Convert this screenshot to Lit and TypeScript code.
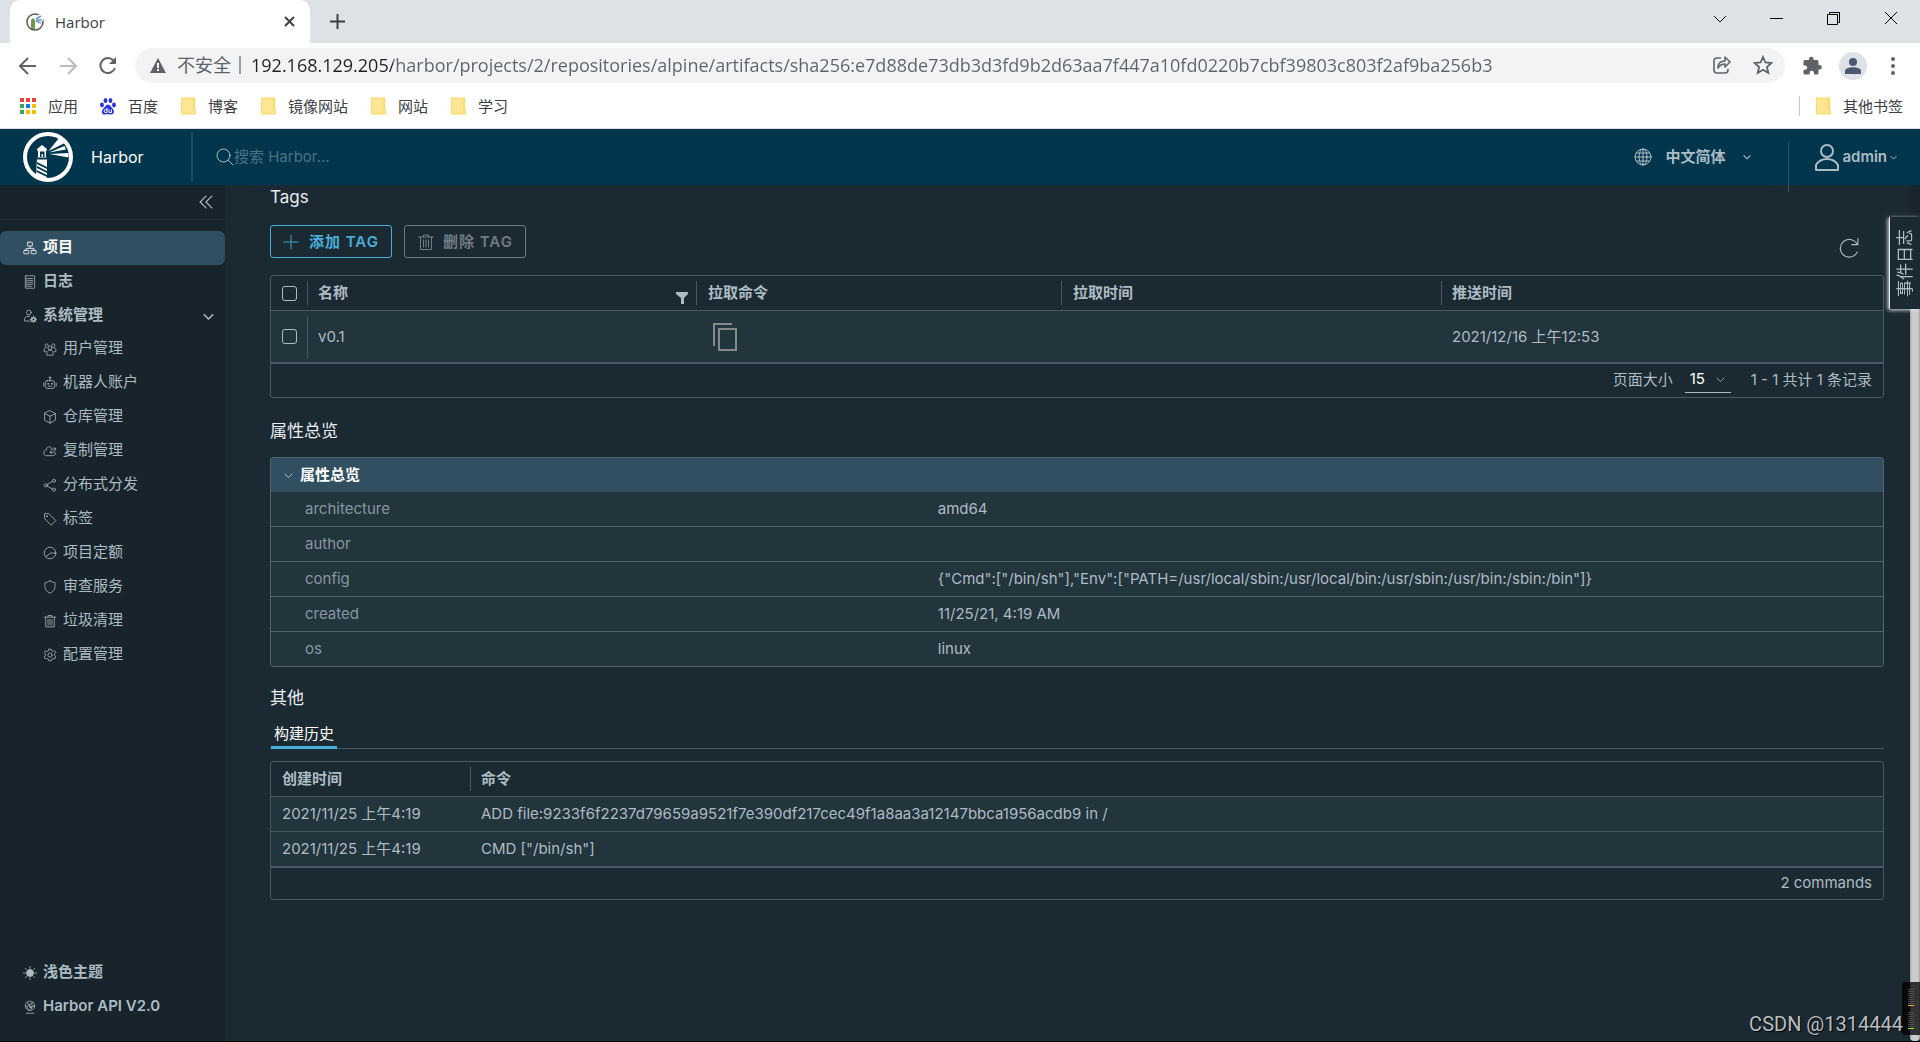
import { LitElement, html, css, svg, nothing } from "lit";
import { customElement, state } from "lit/decorators.js";
import { classMap } from "lit/directives/class-map.js";

const line = (size: number, body: unknown, width = 2, cls = "") => html`<svg
  class=${"ico " + cls} width=${size} height=${size} viewBox="0 0 36 36" fill="none"
  stroke="currentColor" stroke-width=${width} stroke-linecap="round" stroke-linejoin="round" aria-hidden="true">${body}</svg>`;

const glyphs: Record<string, unknown> = {
  project: svg`<rect x="12" y="3" width="12" height="10" rx="1"/><path d="M18 13v6M8 25v-6h20v6"/><rect x="2" y="24" width="13" height="9" rx="2"/><rect x="21" y="24" width="13" height="9" rx="2"/>`,
  log: svg`<rect x="6" y="2" width="24" height="32" rx="1"/><path d="M13 9h12M13 14h12M13 19h12M13 24h12M13 29h9M10 8v22"/>`,
  admin: svg`<circle cx="15" cy="9" r="6"/><path d="M18 31H4v-6c2-5 7-7 13-6"/><circle cx="27" cy="27" r="4.500" stroke-width="4"/><path d="M27 18v3M27 33v3M18 27h3M33 27h3M21 21l2 2M31 31l2 2M33 21l-2 2M23 31l-2 2"/>`,
  users: svg`<circle cx="18" cy="15" r="5"/><path d="M10 33v-6c1-5 4-6 8-6s7 1 8 6v6zM13 10a4 4 0 1 0-6 2M23 10a4 4 0 1 1 6 2M7 25H3v-6c0-3 3-5 6-5M29 25h4v-6c0-3-3-5-6-5"/>`,
  robot: svg`<rect x="6" y="12" width="24" height="20" rx="5"/><path d="M18 12V5M2 18v8M34 18v8M13 26h10"/><circle cx="18" cy="4" r="2"/><circle cx="13" cy="20" r="1.500"/><circle cx="23" cy="20" r="1.500"/>`,
  cube: svg`<path d="M18 2l14 7v17l-14 8-14-8V9zM4 9l14 7 14-7M18 16v18"/>`,
  cloud: svg`<path d="M22 10C19 5 9 6 9 15c-5 0-7 4-7 8 0 4 3 7 7 7h16c4 0 7-2 7-6M20 13h13M29 9l4 4-4 4M31 21H18M22 17l-4 4 4 4"/>`,
  share: svg`<circle cx="7" cy="19" r="4"/><circle cx="28" cy="7" r="4"/><circle cx="28" cy="30" r="4"/><path d="M11 17l13-8M11 21l13 7"/>`,
  tag: svg`<path d="M4 5v12l17 17 12-12L16 5z"/><circle cx="10" cy="11" r="1.500"/>`,
  quota: svg`<circle cx="18" cy="18" r="15"/><path d="M33 18H20L7 27"/>`,
  shield: svg`<path d="M18 2c4 3 8 4 13 5v10c0 8-5 13-13 17C10 30 5 25 5 17V7c5-1 9-2 13-5z"/>`,
  trash: svg`<path d="M3 8h30M7 8v25h22V8M13 8V4h10v4M13 14v14M18 14v14M23 14v14"/>`,
  gear: svg`<circle cx="18" cy="18" r="5.500"/><path d="M15 3h6l1 4 4 2 4-2 3 5-3 3v5l3 3-3 5-4-1-4 2-1 4h-6l-1-4-4-2-4 1-3-5 3-3v-5l-3-3 3-5 4 2 4-2z"/>`,
  sun: svg`<circle cx="18" cy="18" r="9" fill="currentColor"/><path d="M18 1v5M18 30v5M1 18h5M30 18h5M6 6l3 3M27 27l3 3M30 6l-3 3M9 27l-3 3"/>`,
  api: svg`<circle cx="18" cy="15" r="12"/><path d="M8 34h20M11 6l12 18M9 17l12-8 7 9M9 17l7 9M21 9l4-3"/><circle cx="20" cy="18" r="3"/>`,
  plus: svg`<path d="M18 2v32M2 18h32"/>`,
  search: svg`<circle cx="15" cy="15" r="13"/><path d="M25 25l9 9"/>`,
  globe: svg`<circle cx="18" cy="18" r="16"/><ellipse cx="18" cy="18" rx="8" ry="16"/><path d="M18 2v32M2 18h32M5 10h26M5 26h26"/>`,
  down: svg`<path d="M4 12l14 14 14-14"/>`,
  collapse: svg`<path d="M18 3L3 18l15 15M33 3L18 18l15 15"/>`,
  refresh: svg`<path d="M33 25A16 16 0 1 1 32 10M34 1v11H23"/>`,
};

const folder = svg`<path d="M2 0h13a1 1 0 0 1 1 1v11l1 2v3a1 1 0 0 1-1 1H2a1 1 0 0 1-1-1V1a1 1 0 0 1 1-1z" fill="#ffd75e"/><path d="M2 1h12v16H2z" fill="#ffe694"/><path d="M14 13l1-1 1 2v3h-2z" fill="#ffe694"/>`;

@customElement("browser-chrome")
export class BrowserChrome extends LitElement {
  static styles = css`
    :host { display: block; background: #fff; color: #3c4043; font: 15px/20px "Open Sans", "Noto Sans CJK SC", sans-serif; border-bottom: 1px solid #dadce0; }
    button { border: 0; background: none; padding: 0; color: inherit; font: inherit; display: flex; align-items: center; justify-content: center; }
    svg { display: block; flex: none; }
    .tabs { height: 43px; background: #dee1e6; display: flex; align-items: center; padding-left: 10px; }
    .tab { width: 300px; height: 43px; box-sizing: border-box; background: #fff; border-radius: 10px 10px 0 0; display: flex; align-items: center; gap: 11px; padding: 0 15px 0 16px; }
    .tab-title { flex: 1; }
    .new { margin-left: 20px; }
    .window { margin-left: auto; display: flex; gap: 43px; padding: 0 22px 6px 0; color: #000; }
    .window button { width: 14px; height: 14px; }
    .bar { display: flex; align-items: center; height: 45px; padding: 0 18px; color: #5f6368; }
    .nav { display: flex; gap: 20px; margin-right: 17px; }
    .nav button { width: 20px; height: 20px; }
    .off { color: #babcbe; }
    .pill { flex: 1; height: 35px; box-sizing: border-box; border-radius: 18px; background: #f1f3f4; display: flex; align-items: center; padding: 0 12px 1px 15px; font-size: 18px; line-height: 24px; min-width: 0; }
    .insecure { margin-left: 11px; padding-right: 8px; }
    .rule { width: 2px; height: 18px; background: #9aa0a6; }
    .url { flex: 1; min-width: 0; margin-left: 10px; padding: 0; border: 0; outline: 0; font: 18px/24px "Open Sans", sans-serif; color: transparent; background: linear-gradient(90deg, #202124 142px, #5f6368 142px); -webkit-background-clip: text; background-clip: text; }
    .pill-actions { display: flex; gap: 21px; }
    .side { display: flex; align-items: center; gap: 17px; margin-left: 18px; }
    .avatar { width: 28px; height: 28px; border-radius: 14px; background: #dee1e6; color: #4b5a73; }
    .marks { display: flex; align-items: center; height: 40px; box-sizing: border-box; padding: 0 17px 4px 20px; gap: 22px; }
    .mark { display: flex; align-items: center; gap: 12px; color: #3c4043; text-decoration: none; }
    .other { margin-left: auto; border-left: 1px solid #c6c8cb; padding-left: 15px; }
  `;
  @state() url = "192.168.129.205/harbor/projects/2/repositories/alpine/artifacts/sha256:e7d88de73db3d3fd9b2d63aa7f447a10fd0220b7cbf39803c803f2af9ba256b3";
  private stroke(s: number, body: unknown, w = 2) {
    return html`<svg width=${s} height=${s} viewBox="0 0 ${s} ${s}" fill="none" stroke="currentColor" stroke-width=${w} aria-hidden="true">${body}</svg>`;
  }
  private folderMark(name: string) {
    return html`<a class="mark" href="#"><svg width="16" height="18" viewBox="0 0 17 18" aria-hidden="true">${folder}</svg>${name}</a>`;
  }
  render() {
    const dots = ["#ea4335", "#ea4335", "#ea4335", "#34a853", "#1a73e8", "#fbbc04", "#34a853", "#fbbc04", "#fbbc04"];
    return html`
      <div class="tabs">
        <div class="tab">
          <svg width="18" height="18" viewBox="0 0 18 18" fill="none" aria-hidden="true">
            <ellipse cx="9" cy="9" rx="8" ry="8" stroke="#555" stroke-width="1.500"/>
            <path d="M5 7l2-2 2 2v9H5z" fill="#6c9b45"/><path d="M12 2l5-1v7h-4z" fill="#fff"/><path d="M10 6l5-3M10 7h6M10 8l5 2" stroke="#6d9ccc" stroke-width="1.500"/>
          </svg>
          <span class="tab-title">Harbor</span>
          <button aria-label="关闭标签页">${this.stroke(11, svg`<path d="M1 1l9 9M10 1l-9 9"/>`)}</button>
        </div>
        <button class="new" aria-label="新标签页">${this.stroke(15, svg`<path d="M7.500 0v15M0 7.500h15"/>`)}</button>
        <div class="window">
          <button aria-label="搜索标签页">${this.stroke(14, svg`<path d="M1 4l6 6 6-6"/>`, 1)}</button>
          <button aria-label="最小化">${this.stroke(14, svg`<path d="M0 6.500h13"/>`, 1)}</button>
          <button aria-label="还原">${this.stroke(14, svg`<path d="M.5 2.500h10v10H.5zM2.500 2.500v-2h10v10h-2"/>`, 1)}</button>
          <button aria-label="关闭">${this.stroke(14, svg`<path d="M1 0l12 12M13 0L1 12"/>`, 1)}</button>
        </div>
      </div>
      <div class="bar">
        <div class="nav">
          <button aria-label="后退">${this.stroke(20, svg`<path d="M18 10H3M10 2l-8 8 8 8"/>`)}</button>
          <button class="off" aria-label="前进">${this.stroke(20, svg`<path d="M2 10h15M10 2l8 8-8 8"/>`)}</button>
          <button aria-label="重新加载">${this.stroke(20, svg`<path d="M17 12a7.500 7.500 0 1 1-1.500-7.500"/><path d="M18 1v7h-7z" fill="currentColor" stroke="none"/>`)}</button>
        </div>
        <div class="pill">
          <svg width="16" height="15" viewBox="0 0 16 15" aria-hidden="true"><path d="M8 0l8 15H0z" fill="#5f6368"/><path d="M8 5v5M8 11v2" stroke="#fff" stroke-width="2"/></svg>
          <span class="insecure">不安全</span><span class="rule"></span>
          <input class="url" aria-label="地址" .value=${this.url} />
          <div class="pill-actions">
            <button aria-label="分享">${this.stroke(20, svg`<path d="M9 3H5a3 3 0 0 0-3 3v9a3 3 0 0 0 3 3h8a3 3 0 0 0 3-3v-1M6 13c0-5 3-7 7-7V2l5 5-5 5V9c-3 0-5 1-7 4z" stroke-linejoin="round"/>`, 1.6)}</button>
            <button aria-label="收藏">${this.stroke(20, svg`<path d="M10 2l2.400 5.500 6 .5-4.500 4 1.400 6-5.300-3.200L4.700 18l1.400-6-4.500-4 6-.5z"/>`, 1.8)}</button>
          </div>
        </div>
        <div class="side">
          <button aria-label="扩展程序"><svg width="19" height="19" viewBox="0 0 19 19" fill="currentColor" aria-hidden="true"><path d="M6 4V3a2.300 2.300 0 0 1 4.600 0v1H14a1.500 1.500 0 0 1 1.500 1.500V9h1a2.300 2.300 0 0 1 0 4.600h-1V17a1.500 1.500 0 0 1-1.500 1.500h-3V17a2.200 2.200 0 0 0-4.400 0v1.500H2A1.500 1.500 0 0 1 .5 17v-3.200H2a2.200 2.200 0 0 0 0-4.400H.5V5.500A1.500 1.500 0 0 1 2 4z"/></svg></button>
          <button class="avatar" aria-label="个人资料"><svg width="18" height="18" viewBox="0 0 18 18" fill="currentColor" aria-hidden="true"><circle cx="9" cy="5" r="4"/><path d="M1 17v-3c0-5 16-5 16 0v3z"/></svg></button>
          <button aria-label="更多"><svg width="18" height="18" viewBox="0 0 18 18" fill="currentColor" aria-hidden="true"><circle cx="9" cy="2" r="2"/><circle cx="9" cy="9" r="2"/><circle cx="9" cy="16" r="2"/></svg></button>
        </div>
      </div>
      <nav class="marks">
        <a class="mark" href="#"><svg width="16" height="16" viewBox="0 0 16 16" aria-hidden="true">${dots.map((c, i) => svg`<rect x=${(i % 3) * 6} y=${Math.floor(i / 3) * 6} width="4" height="4" fill=${c}/>`)}</svg>应用</a>
        <a class="mark" href="#"><svg width="16" height="17" viewBox="0 0 16 17" fill="#2932e1" aria-hidden="true"><ellipse cx="2" cy="7" rx="1.900" ry="2.400"/><ellipse cx="5.500" cy="2.600" rx="1.900" ry="2.500"/><ellipse cx="10.500" cy="2.600" rx="1.900" ry="2.500"/><ellipse cx="14" cy="7" rx="1.900" ry="2.400"/><path d="M8 6.500c2 0 3 2.500 4.500 4 2.500 2.500 1.500 6-1.500 6-2 0-4-.5-6 0-3 .5-4.500-3.500-1.500-6C5 9 6 6.500 8 6.500z"/><path d="M7 10v4.500H5.500a1 1 0 0 1 0-2.800H7M9 11.500v3h2.500v-3" stroke="#fff" fill="none"/></svg>百度</a>
        ${["博客", "镜像网站", "网站", "学习"].map((n) => this.folderMark(n))}
        <div class="other">${this.folderMark("其他书签")}</div>
      </nav>`;
  }
}

interface NavItem { icon: string; label: string; }

@customElement("app-root")
export class AppRoot extends LitElement {
  static styles = css`
    :host { display: flex; flex-direction: column; height: 100vh; box-sizing: border-box; border-bottom: 1px solid #000; overflow: hidden; position: relative; background: #1b2a32; color: #adbbc4; font: 15px/24px Inter, "Noto Sans CJK SC", sans-serif; }
    * { box-sizing: border-box; }
    button, select, input { font: inherit; color: inherit; }
    button { background: none; border: 0; padding: 0; }
    a { color: inherit; text-decoration: none; }
    h2 { margin: 0; font-size: 17px; font-weight: 400; line-height: 24px; color: #e9ecef; }
    .ico { display: block; flex: none; }
    .header { flex: none; height: 56px; background: #00364d; display: flex; align-items: center; padding-right: 23px; }
    .brand { width: 191px; padding-left: 23px; display: flex; align-items: center; gap: 18px; color: #fff; font-size: 16px; }
    .search { display: flex; align-items: center; flex: 1; height: 50px; padding-left: 23px; border-left: 2px solid #1c4e63; }
    .search input { flex: 1; border: 0; outline: 0; background: none; padding: 0; }
    .search input::placeholder { color: #4c7183; opacity: 1; }
    .menu { display: flex; align-items: center; font-weight: 600; }
    .lang { gap: 13px; padding-right: 37px; }
    .lang .down { margin-left: 5px; }
    .account { align-self: flex-start; margin-top: 13px; height: 50px; padding: 0 0 20px 26px; border-left: 1px solid #2f5363; gap: 3px; }
    .body { flex: 1; min-height: 0; display: flex; }
    .sidenav { width: 225px; flex: none; background: #17242b; display: flex; flex-direction: column; }
    .fold { height: 35px; border-bottom: 1px solid #22333b; display: flex; align-items: center; justify-content: flex-end; padding-right: 12px; }
    .list { list-style: none; margin: 0; padding: 0; font-weight: 600; }
    .main { margin-top: 11px; }
    .sub { margin-top: -1px; font-weight: 400; }
    .link { width: 100%; display: flex; align-items: center; gap: 6px; height: 34px; padding: 0 11px 2px 23px; border-radius: 6px; text-align: left; }
    .link .ico { margin-top: 2px; }
    .link .down { margin-left: auto; }
    .sub .link { padding-left: 43px; }
    .active { background: #324f62; color: #fff; }
    .foot { margin-top: auto; padding-bottom: 17px; }
    .content { flex: 1; min-width: 0; padding: 0 26px 0 45px; }
    .toolbar { display: flex; align-items: flex-end; gap: 12px; margin: 16px 0 17px; }
    .btn { height: 33px; padding: 0 12px; border: 1px solid #49afd9; border-radius: 3px; color: #49afd9; display: flex; align-items: center; gap: 10px; font-size: 15px; font-weight: 600; letter-spacing: 1px; }
    .btn:disabled { border-color: #6c7a82; color: #6f7c84; gap: 8px; }
    .refresh { margin-left: auto; padding-right: 25px; }
    .grid { border: 1px solid #495865; border-radius: 3px; }
    table { width: 100%; border-collapse: separate; border-spacing: 0; table-layout: fixed; }
    th, td { padding: 0; text-align: left; font-weight: 400; }
    th { font-weight: 600; height: 35px; border-bottom: 1px solid #495865; }
    .cell { display: flex; align-items: center; height: 24px; padding-left: 10px; border-left: 1px solid #495865; }
    .cell .filter { margin: 10px 8px 0 auto; }
    td { background: #22343c; height: 35px; border-bottom: 1px solid #495865; padding-left: 11px; }
    tr:last-child td { border-bottom: 0; height: 34px; }
    .tags tr td { height: 51px; }
    .tags tr .pick, .tags tr .first { padding-left: 0; }
    .tags .first .cell { height: 42px; }
    .check { width: 36px; }
    .name { width: 389px; }
    .cmd { width: 365px; }
    .pulled { width: 380px; }
    .when { width: 199px; }
    .history .lead { border-left: 0; }
    .history .lead, .cmd .cell, .pulled .cell { padding-left: 11px; }
    input[type="checkbox"] { appearance: none; display: block; width: 15px; height: 15px; margin: 0 0 0 11px; border: 1px solid #adbbc4; border-radius: 3px; }
    input[type="checkbox"]:checked { background: #49afd9; }
    .copy { display: block; color: #85898b; margin-left: 6px; }
    .gridfoot { display: flex; align-items: center; justify-content: flex-end; height: 35px; border-top: 2px solid #495865; padding: 0 11px 2px 0; }
    .history + .gridfoot { height: 33px; }
    .size { display: flex; align-items: center; gap: 12px; margin-right: 20px; }
    .pick-size { display: flex; align-items: center; position: relative; border-bottom: 1px solid #adbbc4; }
    .pick-size select { appearance: none; width: 46px; height: 25px; padding: 0 5px; border: 0; outline: 0; background: none; color: #fff; }
    .pick-size .ico { position: absolute; right: 6px; pointer-events: none; color: #8c9aa2; }
    .mid { margin: 21px 0 14px; }
    .panel { border: 1px solid #54646e; border-radius: 3px; }
    .panel-head { width: 100%; height: 34px; display: flex; align-items: center; gap: 7px; padding-left: 13px; background: #324f62; color: #fff; font-weight: 600; }
    .panel-head .ico { color: #adbbc4; }
    .panel td { border-color: #54646e; }
    .panel td:first-child { width: 40%; padding-left: 34px; color: #8797a0; }
    .panel td + td { padding-left: 22px; }
    .late { margin: 19px 0 11px; }
    .tabs { height: 28px; border-bottom: 1px solid #495865; margin-bottom: 12px; display: flex; }
    .tabs button { height: 28px; margin-left: 1px; padding: 0 3px; color: #fff; border-bottom: 3px solid #49afd9; line-height: 24px; }
    .scroll { width: 10px; flex: none; background: linear-gradient(90deg, #a8a8a8, #cbcbcb 2px, #cbcbcb 8px, #a0a0a0); border-top: 90px solid #1a262d; border-radius: 0 0 4px 4px; }
    .events { position: absolute; right: 0; top: 217px; width: 31px; height: 92px; background: #1b2a32; border: 0 solid #e4e8ea; border-left-width: 1px; box-shadow: -1px 1px 4px #dfe3e6; }
    .events span { display: block; margin: 0 auto; writing-mode: vertical-rl; text-orientation: sideways; rotate: 180deg; line-height: 24px; font-size: 17px; }
    .meter { position: absolute; right: 0; bottom: 6px; width: 18px; height: 53px; border-radius: 3px 0 0 3px; background: rgba(0, 0, 0, 0.75); padding: 7px 6px; }
    .mark { position: absolute; right: 17px; bottom: 5px; font: 20px/24px Roboto, sans-serif; color: #b9bdc0; text-shadow: 1px 1px 1px #000; }
  `;

  @state() private open = true;
  @state() private panelOpen = true;
  @state() private current = "项目";

  private top: NavItem[] = [
    { icon: "project", label: "项目" },
    { icon: "log", label: "日志" },
  ];
  private admin: NavItem[] = [
    { icon: "users", label: "用户管理" },
    { icon: "robot", label: "机器人账户" },
    { icon: "cube", label: "仓库管理" },
    { icon: "cloud", label: "复制管理" },
    { icon: "share", label: "分布式分发" },
    { icon: "tag", label: "标签" },
    { icon: "quota", label: "项目定额" },
    { icon: "shield", label: "审查服务" },
    { icon: "trash", label: "垃圾清理" },
    { icon: "gear", label: "配置管理" },
  ];
  private overview: [string, string][] = [
    ["architecture", "amd64"],
    ["author", ""],
    ["config", '{"Cmd":["/bin/sh"],"Env":["PATH=/usr/local/sbin:/usr/local/bin:/usr/sbin:/usr/bin:/sbin:/bin"]}'],
    ["created", "11/25/21, 4:19 AM"],
    ["os", "linux"],
  ];
  private history: [string, string][] = [
    ["2021/11/25 上午4:19", "ADD file:9233f6f2237d79659a9521f7e390df217cec49f1a8aa3a12147bbca1956acdb9 in /"],
    ["2021/11/25 上午4:19", 'CMD ["/bin/sh"]'],
  ];

  private item(i: NavItem) {
    return html`<li><a href="#" class=${classMap({ link: true, active: i.label === this.current })} @click=${(e: Event) => { e.preventDefault(); this.current = i.label; }}>${line(14, glyphs[i.icon], 2)}${i.label}</a></li>`;
  }

  private logo() {
    return html`<svg class="ico" width="50" height="50" viewBox="0 0 50 50" aria-hidden="true">
      <circle cx="25" cy="25" r="23" fill="none" stroke="#fff" stroke-width="4"/>
      <path d="M19 13l5 4v1.500h-1v7h1V48c-4 0-9-2-11-4l1-18.500h1v-7h-1V17z" fill="#fff"/>
      <path d="M17 25v-5.500h4.500V25H20v-3h-1.500v3zM14 25.500h10v2H14zM14 30l10 5v2l-10-5zM14 34l10 5v2l-10-5zM13.500 38l10.500 5v2l-10.500-5z" fill="#00364d"/>
      <path d="M25.500 19L36 6l8 4zM26 20.500L41.500 14l1.500 3.500zM26.500 22l19-1v4.500z" fill="#fff"/>
    </svg>`;
  }

  render() {
    return html`
      <browser-chrome></browser-chrome>
      <header class="header">
        <a class="brand" href="#">${this.logo()}Harbor</a>
        <label class="search">${line(18, glyphs.search)}<input type="search" aria-label="搜索" placeholder="搜索 Harbor..." /></label>
        <button class="menu lang">${line(18, glyphs.globe)}中文简体${line(8, glyphs.down, 5, "down")}</button>
        <button class="menu account"><svg class="ico" width="24" height="27" viewBox="0 0 24 27" fill="none" stroke="currentColor" stroke-width="2" aria-hidden="true"><circle cx="12" cy="7" r="6"/><path d="M1 26v-5c5-8 17-8 22 0v5z" stroke-linejoin="round"/></svg>admin${line(7, glyphs.down, 5)}</button>
      </header>
      <div class="body">
        <nav class="sidenav">
          <button class="fold" aria-label="折叠">${line(14, glyphs.collapse, 3)}</button>
          <ul class="list main">
            ${this.top.map((i) => this.item(i))}
            <li>
              <button class="link" aria-expanded=${this.open} @click=${() => (this.open = !this.open)}>${line(14, glyphs.admin, 2)}系统管理${line(11, glyphs.down, 5, "down")}</button>
              ${this.open ? html`<ul class="list sub">${this.admin.map((i) => this.item(i))}</ul>` : nothing}
            </li>
          </ul>
          <ul class="list foot">
            <li><button class="link">${line(14, glyphs.sun, 2)}浅色主题</button></li>
            <li><a class="link" href="#">${line(14, glyphs.api, 2)}Harbor API V2.0</a></li>
          </ul>
        </nav>
        <main class="content">
          <h2>Tags</h2>
          <div class="toolbar">
            <button class="btn">${line(16, glyphs.plus)}添加 TAG</button>
            <button class="btn" disabled>${line(18, glyphs.trash)}删除 TAG</button>
            <button class="refresh" aria-label="刷新">${line(20, glyphs.refresh)}</button>
          </div>
          <div class="grid">
            <table class="tags">
              <thead><tr>
                <th class="check"><input type="checkbox" aria-label="全选" /></th>
                <th class="name"><div class="cell">名称<button class="filter" aria-label="筛选"><svg class="ico" width="12" height="12" viewBox="0 0 12 12" fill="currentColor" aria-hidden="true"><path d="M0 0h12v2L8 6v6H5V6L0 2z"/></svg></button></div></th>
                <th class="cmd"><div class="cell">拉取命令</div></th>
                <th class="pulled"><div class="cell">拉取时间</div></th>
                <th><div class="cell">推送时间</div></th>
              </tr></thead>
              <tbody><tr>
                <td class="pick"><input type="checkbox" aria-label="v0.1" /></td>
                <td class="first"><div class="cell">v0.1</div></td>
                <td><button class="copy" aria-label="复制"><svg class="ico" width="24" height="28" viewBox="0 0 24 28" fill="none" stroke="currentColor" stroke-width="2" aria-hidden="true"><path d="M6 6h17v21H6zM1 23V1h18"/></svg></button></td>
                <td></td>
                <td>2021/12/16 上午12:53</td>
              </tr></tbody>
            </table>
            <div class="gridfoot">
              <label class="size">页面大小
                <span class="pick-size"><select><option>15</option><option>25</option><option>50</option></select>${line(9, glyphs.down, 4)}</span>
              </label>
              <span>1 - 1 共计 1 条记录</span>
            </div>
          </div>

          <h2 class="mid">属性总览</h2>
          <div class="panel">
            <button class="panel-head" aria-expanded=${this.panelOpen} @click=${() => (this.panelOpen = !this.panelOpen)}>${line(9, glyphs.down, 4)}属性总览</button>
            ${this.panelOpen ? html`<table><tbody>${this.overview.map(([k, v]) => html`<tr><td>${k}</td><td>${v}</td></tr>`)}</tbody></table>` : nothing}
          </div>

          <h2 class="late">其他</h2>
          <div class="tabs" role="tablist"><button role="tab" aria-selected="true">构建历史</button></div>
          <div class="grid">
            <table class="history">
              <thead><tr>
                <th class="when"><div class="cell lead">创建时间</div></th>
                <th><div class="cell">命令</div></th>
              </tr></thead>
              <tbody>${this.history.map(([t, c]) => html`<tr><td>${t}</td><td>${c}</td></tr>`)}</tbody>
            </table>
            <div class="gridfoot">2 commands</div>
          </div>
        </main>
        <div class="scroll"></div>
      </div>
      <button class="events"><span>事件日志</span></button>
      <div class="meter"><svg class="ico" width="6" height="40" viewBox="0 0 6 40" aria-hidden="true">
        ${[0, 2, 4, 6, 8, 10, 12, 14, 23, 25, 27, 29, 31, 33, 35, 37].map((y) => svg`<rect x="0" y=${y} width="6" height="1" fill="#4b4b4b"/>`)}
        <rect x="0" y="16" width="6" height="1" fill="#f5a524"/><rect x="0" y="39" width="6" height="1" fill="#80e81c"/></svg></div>
      <div class="mark">CSDN @1314444</div>
    `;
  }
}
